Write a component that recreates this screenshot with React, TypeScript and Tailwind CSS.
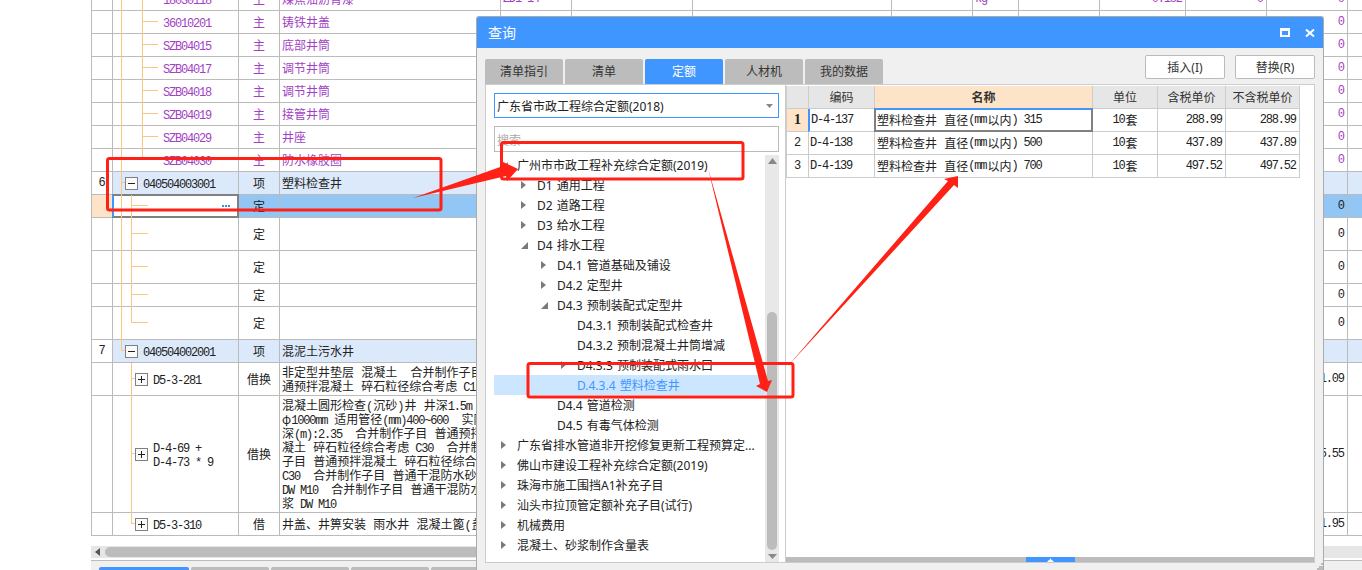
import React from "react";

const ASCII = /^[\x20-\x7e]+$/;
const T = ({ s }: { s: string }) => (
  <>
    {s.split(/([\x20-\x7e]+)/).map((p, i) =>
      ASCII.test(p) ? (
        <span key={i} className="font-['Liberation_Mono',monospace] text-[12px] tracking-[-1.2px] leading-[14px] pr-[1.2px]">
          {p}
        </span>
      ) : (
        <span key={i}>{p}</span>
      )
    )}
  </>
);

const Box = ({ open }: { open?: boolean }) => (
  <svg width="13" height="13" viewBox="0 0 13 13" className="shrink-0" shapeRendering="crispEdges">
    <rect x="0.5" y="0.5" width="12" height="12" fill="#fafafa" stroke="#808080" />
    <path d="M3 6.5H10" stroke="#222" />
    {!open && <path d="M6.5 3V10" stroke="#222" />}
  </svg>
);

type Variant = "purple" | "head" | "sel" | "plain";
type R = {
  h: string;
  v: Variant;
  num?: string;
  pl?: string;
  box?: "open" | "closed";
  code?: string[];
  type: string;
  name?: string[];
  val?: string;
  extra?: Record<number, React.ReactNode>;
};

const rows: R[] = [
  { h: "h-[24px]", v: "purple", pl: "pl-[50px]", code: ["18030118"], type: "主", name: ["煤焦油沥青漆"], val: "0",
    extra: { 4: "ZD1-14", 8: "kg", 10: "0.182", 11: "0" } },
  { h: "h-[23px]", v: "purple", pl: "pl-[50px]", code: ["36010201"], type: "主", name: ["铸铁井盖"], val: "0" },
  { h: "h-[23px]", v: "purple", pl: "pl-[50px]", code: ["SZB04015"], type: "主", name: ["底部井筒"], val: "0" },
  { h: "h-[23px]", v: "purple", pl: "pl-[50px]", code: ["SZB04017"], type: "主", name: ["调节井筒"], val: "0" },
  { h: "h-[23px]", v: "purple", pl: "pl-[50px]", code: ["SZB04018"], type: "主", name: ["调节井筒"], val: "0" },
  { h: "h-[23px]", v: "purple", pl: "pl-[50px]", code: ["SZB04019"], type: "主", name: ["接管井筒"], val: "0" },
  { h: "h-[23px]", v: "purple", pl: "pl-[50px]", code: ["SZB04029"], type: "主", name: ["井座"], val: "0" },
  { h: "h-[23px]", v: "purple", pl: "pl-[50px]", code: ["SZB04030"], type: "主", name: ["防水橡胶圈"], val: "0" },
  { h: "h-[23px]", v: "head", num: "6", pl: "pl-[12px]", box: "open", code: ["040504003001"], type: "项", name: ["塑料检查井"] },
  { h: "h-[23px]", v: "sel", type: "定", val: "0" },
  { h: "h-[33px]", v: "plain", type: "定", val: "0" },
  { h: "h-[33px]", v: "plain", type: "定", val: "0" },
  { h: "h-[23px]", v: "plain", type: "定", val: "0" },
  { h: "h-[33px]", v: "plain", type: "定", val: "0" },
  { h: "h-[23px]", v: "head", num: "7", pl: "pl-[12px]", box: "open", code: ["040504002001"], type: "项", name: ["混泥土污水井"] },
  { h: "h-[33px]", v: "plain", pl: "pl-[22px]", box: "closed", code: ["D5-3-281"], type: "借换",
    name: ["非定型井垫层 混凝土  合并制作子目 普", "通预拌混凝土 碎石粒径综合考虑 C15"], val: "151.09" },
  { h: "h-[117px]", v: "plain", pl: "pl-[22px]", box: "closed", code: ["D-4-69 +", "D-4-73 * 9"], type: "借换",
    name: [
      "混凝土圆形检查(沉砂)井 井深1.5m 内径",
      "φ1000mm 适用管径(mm)400~600  实际井",
      "深(m):2.35  合并制作子目 普通预拌混",
      "凝土 碎石粒径综合考虑 C30  合并制作",
      "子目 普通预拌混凝土 碎石粒径综合考虑",
      "C30  合并制作子目 普通干混防水砂浆",
      "DW M10  合并制作子目 普通干混防水砂",
      "浆 DW M10",
    ], val: "1645.55" },
  { h: "h-[23px]", v: "plain", pl: "pl-[22px]", box: "closed", code: ["D5-3-310"], type: "借", name: ["井盖、井箅安装 雨水井 混凝土篦(盖)"], val: "381.95" },
];

const cell = "border-r border-b border-[#bbb] flex items-center overflow-hidden";

const Lines = ({ items }: { items: string[] }) => (
  <div className="flex flex-col">
    {items.map((c) => (
      <div key={c} className="h-[14px] leading-[14px]">
        <T s={c} />
      </div>
    ))}
  </div>
);

const GridRow = ({ r }: { r: R }) => {
  const purple = r.v === "purple";
  const rowBg = r.v === "head" ? "bg-[#dce9fb]" : r.v === "sel" ? "bg-[#91c6f5]" : "bg-white";
  const color = purple ? "text-[#a23fc4]" : "text-[#222]";
  return (
    <div className={`grid grid-cols-[21px_126px_41px_221px_71px_121px_199px_81px_46px_81px_86px_81px_81px_1fr] ${r.h} ${rowBg} ${color}`}>
      <div className={`${cell} justify-center ${r.v === "sel" ? "bg-[#fde4c8]" : "bg-white"}`}>
        {r.num && <T s={r.num} />}
      </div>
      {r.v === "sel" ? (
        <div className="relative -mt-px -ml-px bg-white border-2 border-[#808080] border-l-[#4096ff] flex items-center justify-end pr-[7px] gap-[1px]">
          <span className="w-[2px] h-[2px] bg-[#3d8fe0]" />
          <span className="w-[2px] h-[2px] bg-[#3d8fe0]" />
          <span className="w-[2px] h-[2px] bg-[#3d8fe0]" />
        </div>
      ) : (
        <div className={`${cell} ${r.pl ?? ""} gap-[5px]`}>
          {r.box && <Box open={r.box === "open"} />}
          {r.code && <Lines items={r.code} />}
        </div>
      )}
      <div className={`${cell} justify-center`}>{r.type}</div>
      <div className={`${cell} pl-[2px]`}>{r.name && <Lines items={r.name} />}</div>
      {[4, 5, 6, 7, 8, 9, 10, 11].map((i) => (
        <div key={i} className={`${cell} ${i === 10 || i === 11 ? "justify-end pr-[2px]" : "pl-[2px]"}`}>
          {r.extra && r.extra[i] ? <T s={String(r.extra[i])} /> : null}
        </div>
      ))}
      <div className={`${cell} justify-end pr-[2px]`}>{r.val && <T s={r.val} />}</div>
      <div className="border-b border-[#bbb]" />
    </div>
  );
};

const TreeLines = () => {
  const c = "#fbc680";
  const t1 = [21.5, 44.5, 67.5, 90.5, 113.5, 136.5, 159.5];
  const t2 = [205.5, 233.5, 266.5, 294.5, 322.5];
  const t3 = [378.5, 453.5, 523.5];
  return (
    <svg className="absolute left-0 top-0 pointer-events-none" width="300" height="570" shapeRendering="crispEdges">
      <path d="M121.5 0V350.5H125M121.5 182.5H125" stroke={c} fill="none" />
      <path d={`M142.5 0V159.5${t1.map((y) => `M142 ${y}H158`).join("")}`} stroke={c} fill="none" />
      <path d={`M131.5 195V322.5${t2.map((y) => `M131 ${y}H148`).join("")}`} stroke={c} fill="none" />
      <path d={`M131.5 363V523.5${t3.map((y) => `M131 ${y}H135`).join("")}`} stroke={c} fill="none" />
    </svg>
  );
};

const Closed = () => (
  <svg width="5" height="8" viewBox="0 0 5 8">
    <path d="M0 0L5 4L0 8z" fill="#7a7a7a" />
  </svg>
);
const Opened = () => (
  <svg width="7" height="7" viewBox="0 0 7 7">
    <path d="M7 0V7H0z" fill="#7a7a7a" />
  </svg>
);

type N = { l: 0 | 1 | 2 | 3; t: string; a?: "c" | "o"; sel?: boolean };
const tree: N[] = [
  { l: 0, t: "广州市市政工程补充综合定额(2019)", a: "o" },
  { l: 1, t: "D1 通用工程", a: "c" },
  { l: 1, t: "D2 道路工程", a: "c" },
  { l: 1, t: "D3 给水工程", a: "c" },
  { l: 1, t: "D4 排水工程", a: "o" },
  { l: 2, t: "D4.1 管道基础及铺设", a: "c" },
  { l: 2, t: "D4.2 定型井", a: "c" },
  { l: 2, t: "D4.3 预制装配式定型井", a: "o" },
  { l: 3, t: "D4.3.1 预制装配式检查井" },
  { l: 3, t: "D4.3.2 预制混凝土井筒增减" },
  { l: 3, t: "D4.3.3 预制装配式雨水口", a: "c" },
  { l: 3, t: "D.4.3.4 塑料检查井", sel: true },
  { l: 2, t: "D4.4 管道检测" },
  { l: 2, t: "D4.5 有毒气体检测" },
  { l: 0, t: "广东省排水管道非开挖修复更新工程预算定...", a: "c" },
  { l: 0, t: "佛山市建设工程补充综合定额(2019)", a: "c" },
  { l: 0, t: "珠海市施工围挡A1补充子目", a: "c" },
  { l: 0, t: "汕头市拉顶管定额补充子目(试行)", a: "c" },
  { l: 0, t: "机械费用", a: "c" },
  { l: 0, t: "混凝土、砂浆制作含量表", a: "c" },
];
const pad = ["pl-[7px]", "pl-[27px]", "pl-[47px]", "pl-[67px]"];

const tabs = ["清单指引", "清单", "定额", "人材机", "我的数据"];

const thCell = "border-r border-b border-[#ccc] flex items-center justify-center bg-[#e6e6e6] text-[#333]";
const tdCell = "border-r border-b border-[#ccc] flex items-center text-[#222]";
const results = [
  ["D-4-137", "塑料检查井 直径(mm以内) 315", "288.99"],
  ["D-4-138", "塑料检查井 直径(mm以内) 500", "437.89"],
  ["D-4-139", "塑料检查井 直径(mm以内) 700", "497.52"],
];

const Dialog = () => (
  <div className="absolute left-[476px] top-[16px] w-[848px] h-[554px] flex flex-col bg-[#f0f0f0] border-t border-x border-[#aaa] rounded-t-[3px] overflow-hidden font-['Noto_Sans','Noto_Sans_CJK_SC',sans-serif] text-xs">
    <div className="h-[31px] shrink-0 bg-[#4096ff] flex items-center justify-between pl-[11px] pr-[8px] text-white">
      <span className="text-[14px] leading-none pt-[1px]">查询</span>
      <div className="flex items-center gap-[15px]">
        <span className="w-[10px] h-[9px] border-2 border-t-[3px] border-white" />
        <svg width="10" height="8" viewBox="0 0 10 8">
          <path d="M1 0.5L9 7.5M9 0.5L1 7.5" stroke="#fff" strokeWidth="2" fill="none" />
        </svg>
      </div>
    </div>
    <div className="h-[36px] shrink-0 px-[8px] flex justify-between items-end">
      <div className="flex gap-[2px]">
        {tabs.map((t) => (
          <div
            key={t}
            className={`w-[78px] h-[25px] pt-[1px] rounded-t-[2px] flex items-center justify-center ${
              t === "定额" ? "bg-[#4096ff] text-white" : "bg-[#bcbcbc] text-[#333]"
            }`}
          >
            {t}
          </div>
        ))}
      </div>
      <div className="flex gap-[10px] mb-[5px]">
        {["插入(I)", "替换(R)"].map((t) => (
          <div key={t} className="w-[80px] h-[24px] pt-[2px] bg-white border border-[#bbb] rounded-[2px] flex items-center justify-center text-[#333]">
            {t}
          </div>
        ))}
      </div>
    </div>
    <div className="mx-[8px] h-[479px] shrink-0 flex border-y border-[#ccc] bg-white">
      <div className="w-[300px] shrink-0 border-l border-[#ccc] pl-[8px] pt-[8px] flex flex-col">
        <div className="w-[285px] h-[25px] border border-[#4096ff] flex items-center justify-between pl-[2px] pr-[5px] text-[#222]">
          <span className="pt-[2px]">广东省市政工程综合定额(2018)</span>
          <svg width="7" height="4" viewBox="0 0 7 4">
            <path d="M0 0H7L3.5 4z" fill="#888" />
          </svg>
        </div>
        <div className="w-[285px] h-[26px] mt-[8px] border border-[#bbb] flex items-center pl-[2px] pt-[3px] text-[#aaa]">搜索</div>
        <div className="w-[285px] mt-[3px] flex flex-1 min-h-0">
          <div className="w-[271px] shrink-0">
            {tree.map((n) => (
              <div
                key={n.t}
                className={`h-[20px] flex items-center whitespace-nowrap ${pad[n.l]} ${
                  n.sel ? "bg-[#cce6ff] text-[#4096ff]" : "text-[#222]"
                }`}
              >
                <span className="w-[16px] shrink-0 flex items-center">
                  {n.a === "c" && <Closed />}
                  {n.a === "o" && <Opened />}
                </span>
                <span className="pt-[1px] [word-spacing:1px]">{n.t}</span>
              </div>
            ))}
          </div>
          <div className="w-[14px] shrink-0 bg-[#e8e8e8] flex flex-col items-center pt-[3px]">
            <svg width="9" height="6" viewBox="0 0 9 6" className="shrink-0">
              <path d="M0 6L4.5 0L9 6z" fill="#888" />
            </svg>
            <div className="w-[10px] h-[238px] mt-[148px] rounded-full bg-[#bcbcbc] shrink-0" />
            <svg width="9" height="5" viewBox="0 0 9 5" className="mt-[4px] shrink-0">
              <path d="M0 0H9L4.5 5z" fill="#888" />
            </svg>
          </div>
        </div>
      </div>
      <div className="flex-1 border-x border-[#ccc] flex flex-col font-['Noto_Sans_CJK_SC',sans-serif] whitespace-pre">
        <div className="pt-[1px] flex-1">
          <div className="w-[514px] border-l border-[#ccc]">
            <div className="grid grid-cols-[22px_66px_218px_65px_68px_74px] h-[23px]">
              <div className={thCell} />
              <div className={thCell}>编码</div>
              <div className={`${thCell} !bg-[#fde4c8] font-bold`}>名称</div>
              <div className={thCell}>单位</div>
              <div className={thCell}>含税单价</div>
              <div className={thCell}>不含税单价</div>
            </div>
            {results.map((r, i) => (
              <div key={r[0]} className="grid grid-cols-[22px_66px_218px_65px_68px_74px] h-[23px]">
                {i === 0 ? (
                  <div className={`${tdCell} justify-center bg-[#fde4c8] font-['Liberation_Serif',serif] font-bold text-[14px]`}>1</div>
                ) : (
                  <div className={`${tdCell} justify-center`}>
                    <T s={String(i + 1)} />
                  </div>
                )}
                <div className={`${tdCell} pl-[1px] ${i === 0 ? "border-l-2 border-l-[#4096ff] -ml-px" : ""}`}>
                  <T s={r[0]} />
                </div>
                <div
                  className={
                    i === 0
                      ? "-mt-px -ml-px border-2 border-[#808080] border-t-[#4096ff] flex items-center pl-[1px] text-[#222] bg-white"
                      : `${tdCell} pl-[2px]`
                  }
                >
                  <T s={r[1]} />
                </div>
                <div className={`${tdCell} justify-center`}>
                  <T s="10" />套
                </div>
                <div className={`${tdCell} justify-end pr-[2px]`}>
                  <T s={r[2]} />
                </div>
                <div className={`${tdCell} justify-end pr-[2px]`}>
                  <T s={r[2]} />
                </div>
              </div>
            ))}
          </div>
        </div>
        <div className="h-[5px] shrink-0 bg-[#bcbcbc] flex justify-center">
          <div className="w-[49px] bg-[#4096ff] flex items-center justify-center">
            <svg width="7" height="4" viewBox="0 0 7 4">
              <path d="M0 4L2 2H2.5L3.5 0L4.5 2H5L7 4z" fill="#fff" />
            </svg>
          </div>
        </div>
      </div>
    </div>
    <svg width="6" height="7" viewBox="0 0 6 7" className="absolute right-0 bottom-0" shapeRendering="crispEdges">
      <path d="M4 0h2v2h-2zM2 3h2v2h-2zM4 3h2v2h-2zM0 5h2v2h-2zM2 5h2v2h-2zM4 5h2v2h-2z" fill="#bbb" />
    </svg>
  </div>
);

const Annotations = () => (
  <svg className="absolute left-0 top-0 pointer-events-none" width="1362" height="570">
    <g fill="none" stroke="#ff2016" strokeWidth="3">
      <rect x="107.5" y="158.5" width="333.5" height="51.5" rx="2" />
      <rect x="501.5" y="142.5" width="241.5" height="36.5" rx="2" />
      <rect x="528" y="363.5" width="265" height="33.5" rx="2" />
    </g>
    <g fill="#ff2016">
      <polygon points="413,198 503,166 501,161 518,169 507,181 506,176" />
      <polygon points="708,168 768,381 772,380 767,392 756,386 760,384" />
      <polygon points="787,367 948,181 944,179 958,176 958,188 954,185" />
    </g>
  </svg>
);

export default function App() {
  return (
    <div className="relative w-[1362px] h-[570px] overflow-hidden bg-white text-xs leading-[14px] font-['Noto_Sans_CJK_SC',sans-serif] whitespace-pre">
      <div className="ml-[91px] -mt-[13px] flex flex-col h-[583px]">
        <div className="border-l border-[#bbb]">
          {rows.map((r, i) => (
            <GridRow key={i} r={r} />
          ))}
        </div>
        <div className="h-[10px] shrink-0" />
        <div className="h-[12px] shrink-0 bg-[#e6e6e6] flex items-center">
          <svg width="5" height="8" viewBox="0 0 5 8" className="ml-[4px] shrink-0">
            <path d="M5 0V8L0 4z" fill="#555" />
          </svg>
          <div className="ml-[5px] w-[1000px] h-[10px] rounded-full bg-[#bcbcbc] shrink-0" />
        </div>
        <div className="h-[2px] shrink-0" />
        <div className="h-[1px] shrink-0 bg-[#bbb]" />
        <div className="h-[6px] shrink-0 bg-[#f0f0f0]" />
        <div className="flex-1 bg-[#f0f0f0] flex gap-[2px] pl-[8px]">
          <div className="w-[90px] bg-[#4096ff] rounded-t-[2px]" />
          {[0, 1, 2, 3, 4].map((i) => (
            <div key={i} className="w-[78px] bg-[#bcbcbc] rounded-t-[2px]" />
          ))}
        </div>
      </div>
      <TreeLines />
      <Dialog />
      <Annotations />
    </div>
  );
}
